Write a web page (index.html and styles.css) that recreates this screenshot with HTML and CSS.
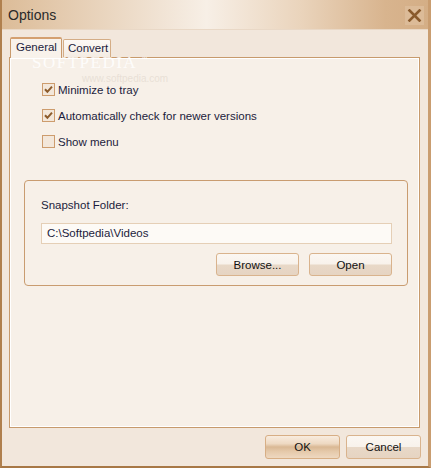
FILE: index.html
```html
<!DOCTYPE html>
<html>
<head>
<meta charset="utf-8">
<link rel="stylesheet" href="styles.css">
</head>
<body>
<div class="window">
  <div class="titlebar">
    <span class="title">Options</span>
    <span class="close"><svg width="15" height="13" viewBox="0 0 15 13"><path d="M2.5 1.5 L12.5 11.5 M12.5 1.5 L2.5 11.5" stroke="#8a5a2c" stroke-width="2.6" stroke-linecap="square"/></svg></span>
  </div>
  <div class="content">
    <div class="tabs">
      <div class="tab active">General</div>
      <div class="tab">Convert</div>
    </div>
    <div class="panel">
      <div class="wm wm1">SOFTPEDIA<sup>™</sup></div>
      <div class="wm wm2">www.softpedia.com</div>
      <div class="checks">
        <label class="check"><span class="box checked"><svg width="11" height="11" viewBox="0 0 11 11"><path d="M2 5.2 L4.4 7.8 L9 2.6" fill="none" stroke="#8c5b2b" stroke-width="2"/></svg></span>Minimize to tray</label>
        <label class="check"><span class="box checked"><svg width="11" height="11" viewBox="0 0 11 11"><path d="M2 5.2 L4.4 7.8 L9 2.6" fill="none" stroke="#8c5b2b" stroke-width="2"/></svg></span>Automatically check for newer versions</label>
        <label class="check"><span class="box"></span>Show menu</label>
      </div>
      <div class="group">
        <div class="glabel">Snapshot Folder:</div>
        <div class="input">C:\Softpedia\Videos</div>
        <div class="grow">
          <div class="btn">Browse...</div>
          <div class="btn">Open</div>
        </div>
      </div>
    </div>
    <div class="footer">
      <div class="btn big default">OK</div>
      <div class="btn big">Cancel</div>
    </div>
  </div>
</div>
</body>
</html>
```

FILE: styles.css
```css
* { box-sizing: border-box; }
html, body { margin: 0; padding: 0; }
body { width: 431px; height: 468px; overflow: hidden; font-family: "Liberation Sans", Arial, sans-serif; font-size: 11.5px; color: #1c1c3c; }
.window {
  width: 431px; height: 468px;
  border-left: 2px solid #b0804e;
  border-right: 3px solid #c99d70;
  border-bottom: 2px solid #a87846;
  background: #f2e7dc;
  display: flex; flex-direction: column;
}
.titlebar {
  height: 30px; flex: none;
  background: linear-gradient(90deg, #dcbc98 0%, #ead6c0 25%, #f7efe6 48%, #ead4bc 70%, #d8b48e 90%, #d4ae86 100%);
  display: flex; align-items: center; justify-content: space-between;
  padding: 0 4px 0 6px;
  border-bottom: 1px solid #e9d8c6;
}
.title { font-size: 14px; color: #2a2a2a; }
.close { width: 19px; height: 19px; display: flex; align-items: center; justify-content: center; background: #dcbb98; margin-top: 1px; }
.content { padding: 7px 7px 0 7px; display: flex; flex-direction: column; flex: 1; }
.tabs { display: flex; align-items: flex-end; height: 20px; padding-left: 1px; position: relative; z-index: 2; }
.tab {
  height: 18px; width: 48px; padding: 0 0 0 4px; border: 1px solid #d4ad86; border-bottom: none;
  border-radius: 2px 2px 0 0; background: linear-gradient(#fdf9f5, #f4ece3);
  line-height: 17px;
}
.tab.active {
  height: 21px; width: 52px; padding: 0 0 0 5px; border-color: #c99a6c; border-top: 2px solid #d4a070;
  background: #f8f2eb; line-height: 17px; margin-bottom: -1px;
}
.tab + .tab { margin-left: 1px; }
.panel {
  height: 371px; width: 411px; border: 1px solid #c79a6c; box-shadow: inset 1px 1px 0 #fff, inset -1px -1px 0 #fff;
  background: #f7f0e8; position: relative; padding: 25px 14px 0 14px;
}
.wm { position: absolute; pointer-events: none; white-space: nowrap; }
.wm1 { left: 22px; top: -2px; height: 14px; font-size: 17px; letter-spacing: 1.5px; color: rgba(255,255,255,0.85); font-family: "Liberation Serif", serif; line-height: 14px; }
.wm1 sup { font-size: 6px; line-height: 6px; font-family: "Liberation Sans", sans-serif; vertical-align: top; margin-left: 4px; }
.wm2 { left: 72px; top: 16px; height: 9px; font-size: 10px; line-height: 9px; color: rgba(226,216,206,0.7); }
.checks { display: flex; flex-direction: column; gap: 13px; padding-left: 18px; position: relative; }
.check { display: flex; align-items: center; height: 13px; gap: 3px; }
.box { width: 13px; height: 13px; border: 1px solid #cd9c6d; background: #f3e7da; display: flex; align-items: center; justify-content: center; }
.group {
  margin-top: 32px; height: 106px; width: 384px; border: 1px solid #c99c70; border-radius: 4px;
  padding: 18px 14px 0 16px;
}
.glabel { height: 13px; line-height: 13px; }
.input { margin-top: 11px; height: 21px; width: 351px; border: 1px solid #e5cfb6; background: #fdfaf6; padding: 0 5px; line-height: 19px; }
.grow { display: flex; justify-content: flex-end; gap: 10px; margin-top: 9px; width: 351px; }
.btn {
  width: 83px; height: 23px; border: 1px solid #d9b38d; border-radius: 3px;
  background: linear-gradient(#fbf7f2 0%, #f8f2eb 48%, #e8d8c7 52%, #e6d4c2 100%);
  display: flex; align-items: center; justify-content: center; color: #111;
}
.footer { display: flex; justify-content: flex-end; gap: 6px; padding-top: 7px; }
.btn.big { width: 75px; height: 24px; }
.btn.default {
  border-color: #d7ae85;
  background: linear-gradient(#f8ecdf 0%, #eed9c2 35%, #d9b894 50%, #e5c9aa 70%, #eed8c0 100%);
}
```
